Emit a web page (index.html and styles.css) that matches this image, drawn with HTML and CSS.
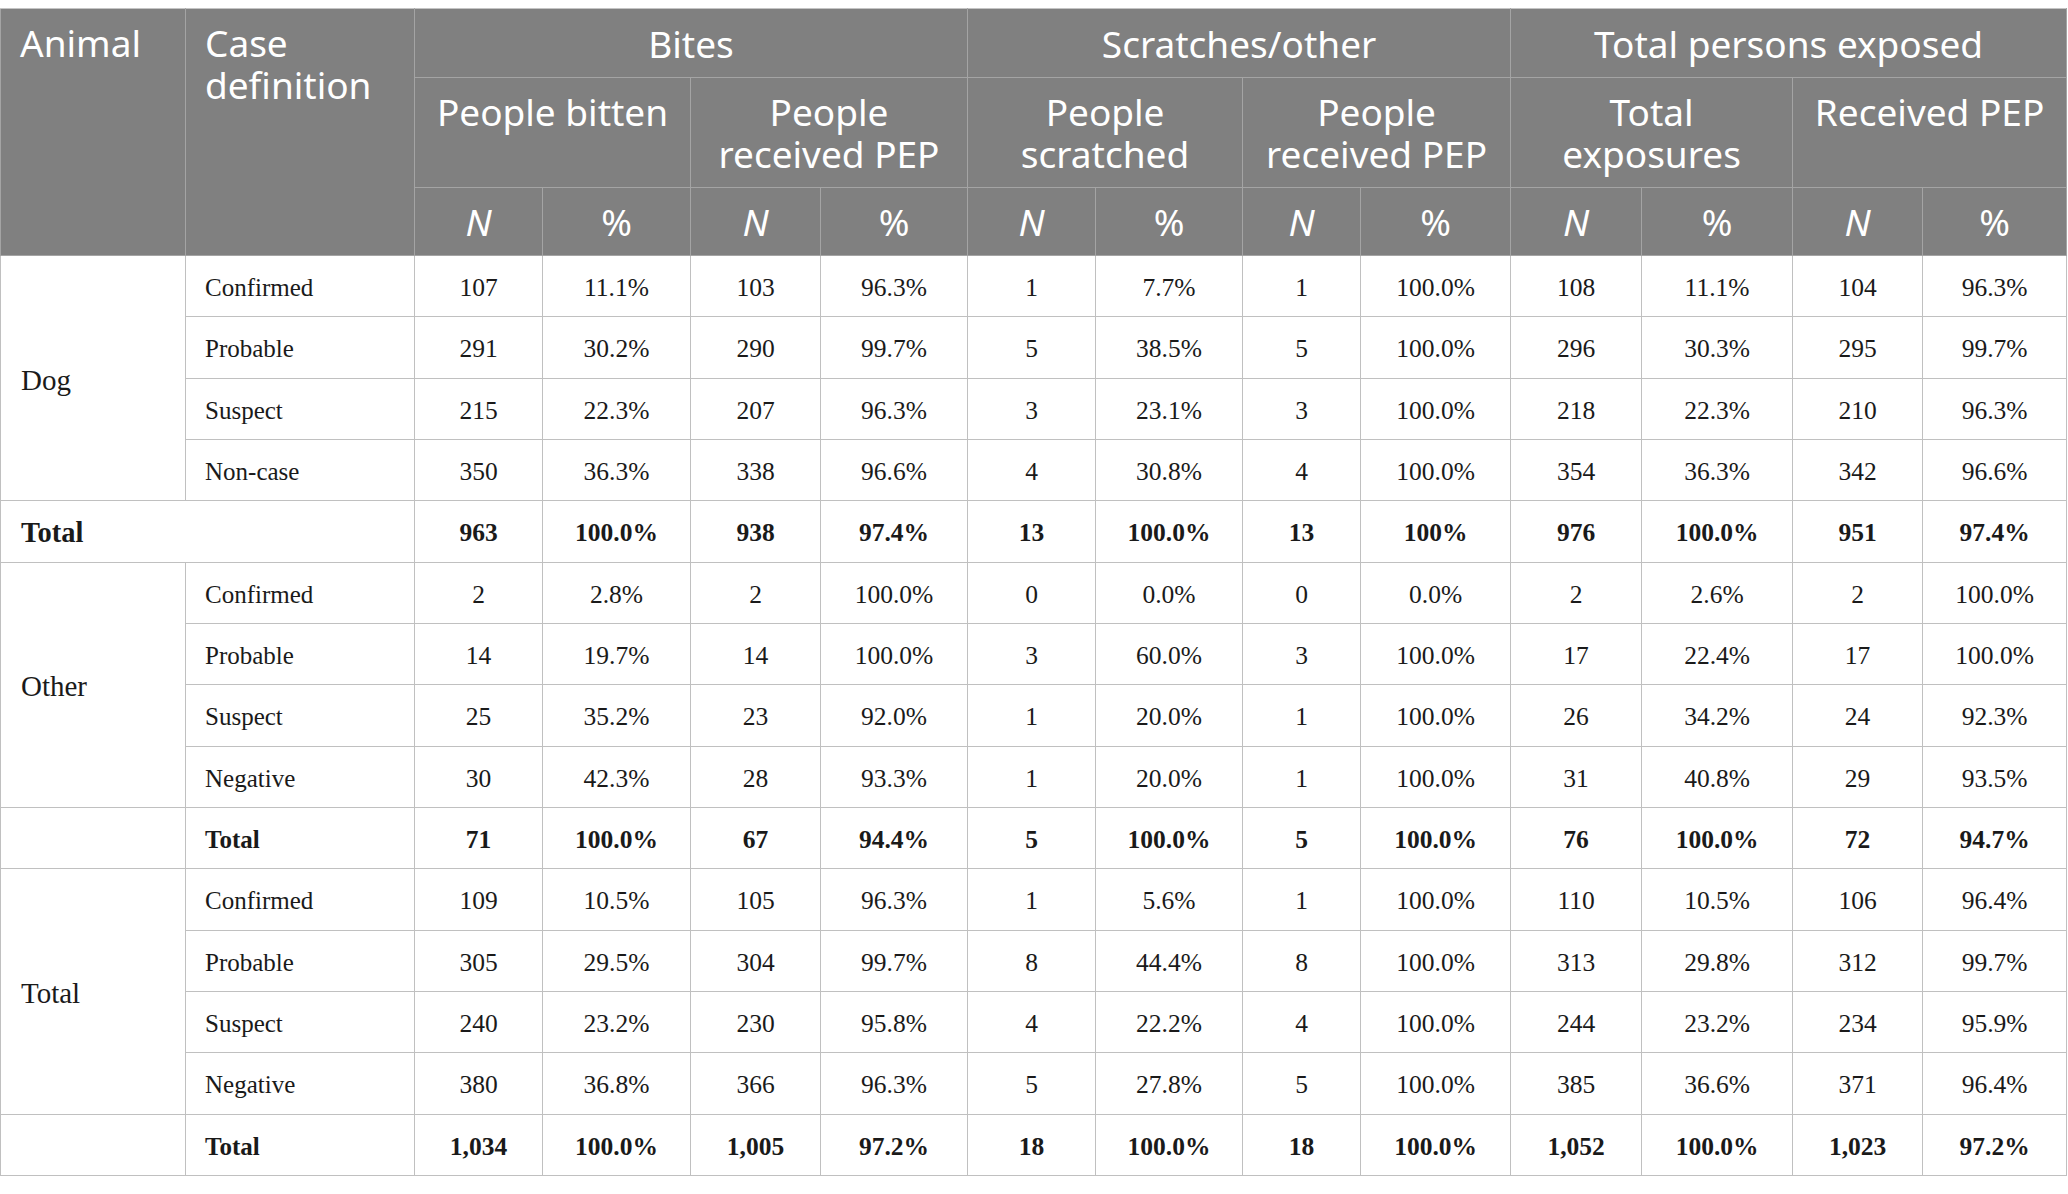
FILE: index.html
```html
<!DOCTYPE html>
<html lang="en">
<head>
<meta charset="utf-8">
<title>Rabies exposures table</title>
<link rel="stylesheet" href="styles.css">
</head>
<body>
<table class="data">
  <colgroup>
    <col class="c-animal"><col class="c-case">
    <col class="c1"><col class="c2"><col class="c3"><col class="c4">
    <col class="c5"><col class="c6"><col class="c7"><col class="c8">
    <col class="c9"><col class="c10"><col class="c11"><col class="c12">
  </colgroup>
  <thead>
    <tr class="h1">
      <th rowspan="3" class="left top">Animal</th>
      <th rowspan="3" class="left top">Case<br>definition</th>
      <th colspan="4">Bites</th>
      <th colspan="4">Scratches/other</th>
      <th colspan="4">Total persons exposed</th>
    </tr>
    <tr class="h2">
      <th colspan="2" class="top">People bitten</th>
      <th colspan="2" class="top">People<br>received PEP</th>
      <th colspan="2" class="top">People<br>scratched</th>
      <th colspan="2" class="top">People<br>received PEP</th>
      <th colspan="2" class="top">Total<br>exposures</th>
      <th colspan="2" class="top">Received PEP</th>
    </tr>
    <tr class="h3">
      <th><i>N</i></th><th>%</th>
      <th><i>N</i></th><th>%</th>
      <th><i>N</i></th><th>%</th>
      <th><i>N</i></th><th>%</th>
      <th><i>N</i></th><th>%</th>
      <th><i>N</i></th><th>%</th>
    </tr>
  </thead>
  <tbody>
    <tr><td rowspan="4" class="left animal">Dog</td><td class="left small">Confirmed</td><td>107</td><td>11.1%</td><td>103</td><td>96.3%</td><td>1</td><td>7.7%</td><td>1</td><td>100.0%</td><td>108</td><td>11.1%</td><td>104</td><td>96.3%</td></tr>
    <tr><td class="left small">Probable</td><td>291</td><td>30.2%</td><td>290</td><td>99.7%</td><td>5</td><td>38.5%</td><td>5</td><td>100.0%</td><td>296</td><td>30.3%</td><td>295</td><td>99.7%</td></tr>
    <tr><td class="left small">Suspect</td><td>215</td><td>22.3%</td><td>207</td><td>96.3%</td><td>3</td><td>23.1%</td><td>3</td><td>100.0%</td><td>218</td><td>22.3%</td><td>210</td><td>96.3%</td></tr>
    <tr><td class="left small">Non-case</td><td>350</td><td>36.3%</td><td>338</td><td>96.6%</td><td>4</td><td>30.8%</td><td>4</td><td>100.0%</td><td>354</td><td>36.3%</td><td>342</td><td>96.6%</td></tr>
    <tr class="bold"><td colspan="2" class="left animal">Total</td><td>963</td><td>100.0%</td><td>938</td><td>97.4%</td><td>13</td><td>100.0%</td><td>13</td><td>100%</td><td>976</td><td>100.0%</td><td>951</td><td>97.4%</td></tr>

    <tr><td rowspan="4" class="left animal">Other</td><td class="left small">Confirmed</td><td>2</td><td>2.8%</td><td>2</td><td>100.0%</td><td>0</td><td>0.0%</td><td>0</td><td>0.0%</td><td>2</td><td>2.6%</td><td>2</td><td>100.0%</td></tr>
    <tr><td class="left small">Probable</td><td>14</td><td>19.7%</td><td>14</td><td>100.0%</td><td>3</td><td>60.0%</td><td>3</td><td>100.0%</td><td>17</td><td>22.4%</td><td>17</td><td>100.0%</td></tr>
    <tr><td class="left small">Suspect</td><td>25</td><td>35.2%</td><td>23</td><td>92.0%</td><td>1</td><td>20.0%</td><td>1</td><td>100.0%</td><td>26</td><td>34.2%</td><td>24</td><td>92.3%</td></tr>
    <tr><td class="left small">Negative</td><td>30</td><td>42.3%</td><td>28</td><td>93.3%</td><td>1</td><td>20.0%</td><td>1</td><td>100.0%</td><td>31</td><td>40.8%</td><td>29</td><td>93.5%</td></tr>
    <tr class="bold"><td></td><td class="left small">Total</td><td>71</td><td>100.0%</td><td>67</td><td>94.4%</td><td>5</td><td>100.0%</td><td>5</td><td>100.0%</td><td>76</td><td>100.0%</td><td>72</td><td>94.7%</td></tr>

    <tr><td rowspan="4" class="left animal">Total</td><td class="left small">Confirmed</td><td>109</td><td>10.5%</td><td>105</td><td>96.3%</td><td>1</td><td>5.6%</td><td>1</td><td>100.0%</td><td>110</td><td>10.5%</td><td>106</td><td>96.4%</td></tr>
    <tr><td class="left small">Probable</td><td>305</td><td>29.5%</td><td>304</td><td>99.7%</td><td>8</td><td>44.4%</td><td>8</td><td>100.0%</td><td>313</td><td>29.8%</td><td>312</td><td>99.7%</td></tr>
    <tr><td class="left small">Suspect</td><td>240</td><td>23.2%</td><td>230</td><td>95.8%</td><td>4</td><td>22.2%</td><td>4</td><td>100.0%</td><td>244</td><td>23.2%</td><td>234</td><td>95.9%</td></tr>
    <tr><td class="left small">Negative</td><td>380</td><td>36.8%</td><td>366</td><td>96.3%</td><td>5</td><td>27.8%</td><td>5</td><td>100.0%</td><td>385</td><td>36.6%</td><td>371</td><td>96.4%</td></tr>
    <tr class="bold"><td></td><td class="left small">Total</td><td>1,034</td><td>100.0%</td><td>1,005</td><td>97.2%</td><td>18</td><td>100.0%</td><td>18</td><td>100.0%</td><td>1,052</td><td>100.0%</td><td>1,023</td><td>97.2%</td></tr>
  </tbody>
</table>
</body>
</html>
```

FILE: styles.css
```css
html, body {
  margin: 0;
  padding: 0;
  background: #ffffff;
}

body {
  padding-top: 8px;
}

.data {
  width: 2066px;
  table-layout: fixed;
  border-collapse: collapse;
  border-spacing: 0;
}

.c-animal { width: 185px; }
.c-case { width: 229px; }
.c1 { width: 128px; }
.c2 { width: 148px; }
.c3 { width: 130px; }
.c4 { width: 147px; }
.c5 { width: 128px; }
.c6 { width: 147px; }
.c7 { width: 118px; }
.c8 { width: 150px; }
.c9 { width: 131px; }
.c10 { width: 151px; }
.c11 { width: 130px; }
.c12 { width: 144px; }

.data th {
  background: #808080;
  color: #ffffff;
  font-family: "Noto Sans", "Open Sans", sans-serif;
  font-weight: 400;
  font-size: 37px;
  line-height: 42px;
  text-align: center;
  vertical-align: middle;
  border: 1px solid #a4a4a4;
  padding: 0 6px;
}

.data thead tr:first-child th {
  border-top-color: #c4c4c4;
}

.data .h1 th {
  padding-top: 2px;
}

.data th i {
  font-style: italic;
}

.data th.top,
.data .h1 th.top {
  vertical-align: top;
  padding-top: 13px;
}

.data th.left {
  text-align: left;
  padding-left: 19px;
}

.h1 { height: 69px; }
.h2 { height: 110px; }
.h3 { height: 68px; }

.data tbody tr {
  height: 61.33px;
}

.data td {
  font-family: "Liberation Serif", "Times New Roman", serif;
  font-size: 25.5px;
  color: #1a1a1a;
  text-align: center;
  vertical-align: middle;
  border: 1px solid #c0c0c0;
  padding: 4px 6px 0;
}

.data td.left {
  text-align: left;
  padding-left: 20px;
}

.data td.small {
  font-size: 25px;
  padding-left: 19px;
}

.data td.animal {
  font-size: 29px;
}

.data tr.bold td.animal {
  font-size: 28.5px;
}

.data tr.bold td {
  font-weight: 700;
}
```
